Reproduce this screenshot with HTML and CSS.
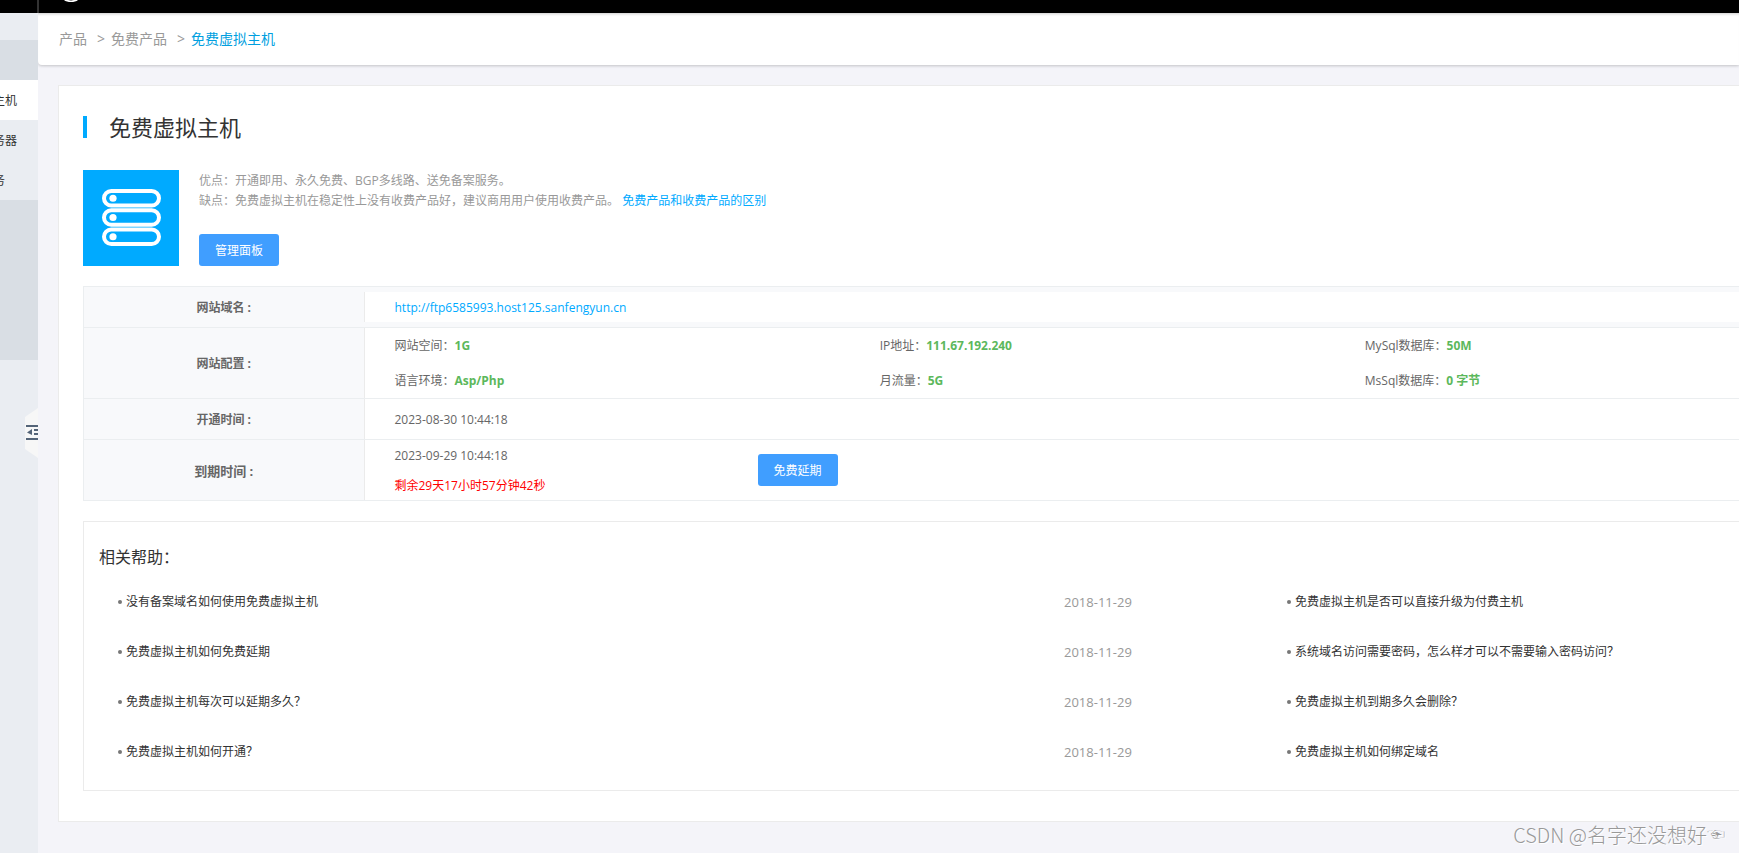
FILE: index.html
```html
<!DOCTYPE html>
<html lang="zh-CN">
<head>
<meta charset="utf-8">
<title>免费虚拟主机</title>
<link rel="stylesheet" href="styles.css">
</head>
<body>
<div class="page">
  <header class="topbar">
    <div class="topbar-side"></div>
    <svg class="topbar-logo" width="16" height="3" viewBox="0 0 16 3"><path d="M1 0h4c2 .6 4 .6 6 0h4c-3 2.700-11 2.700-14 0z" fill="#fff"/></svg>
  </header>
  <div class="body">
    <aside class="sidebar">
      <nav class="menu">
        <div class="menu-head"></div>
        <a class="menu-item active" href="#">主机</a>
        <a class="menu-item" href="#">务器</a>
        <a class="menu-item short" href="#">务</a>
        <div class="menu-groups"></div>
      </nav>
      <button class="collapse" type="button" aria-label="collapse">
        <svg width="13" height="50" viewBox="0 0 13 50"><path d="M0 9 13 0V50L0 41z" fill="#f7f7f7"/><path d="M1 17h12v2H1zM1 30h12v2H1zM9 21h4v2H9zM9 25h4v2H9zM7 21v6L2 24.500z" fill="#546478"/></svg>
      </button>
    </aside>
    <main class="main">
      <nav class="crumbs">
        <a href="#">产品</a><span class="sep">&gt;</span><a href="#">免费产品</a><span class="sep">&gt;</span><a class="current" href="#">免费虚拟主机</a>
      </nav>
      <section class="card">
        <h1 class="title">免费虚拟主机</h1>
        <div class="intro">
          <svg class="product-icon" width="96" height="96" viewBox="0 0 96 96"><rect width="96" height="96" fill="#00aaff"/><g fill="none" stroke="#fff" stroke-width="4"><rect x="21" y="21" width="55" height="14.500" rx="7.250"/><rect x="21" y="40.250" width="55" height="14.500" rx="7.250"/><rect x="21" y="59.500" width="55" height="14.500" rx="7.250"/></g><g fill="#fff"><circle cx="30" cy="28.250" r="3.600"/><circle cx="30" cy="47.500" r="3.600"/><circle cx="30" cy="66.750" r="3.600"/></g></svg>
          <div class="intro-text">
            <p>优点：开通即用、永久免费、BGP多线路、送免备案服务。</p>
            <p>缺点：免费虚拟主机在稳定性上没有收费产品好，建议商用用户使用收费产品。 <a href="#">免费产品和收费产品的区别</a></p>
            <button class="btn" type="button">管理面板</button>
          </div>
        </div>
        <table class="info">
          <tr class="domain"><th>网站域名 :</th><td><div class="line"><a href="#">http://ftp6585993.host125.sanfengyun.cn</a></div></td></tr>
          <tr><th>网站配置 :</th><td><div class="specs">
            <span>网站空间：<b>1G</b></span><span>IP地址：<b>111.67.192.240</b></span><span>MySql数据库：<b>50M</b></span>
            <span>语言环境：<b>Asp/Php</b></span><span>月流量：<b>5G</b></span><span>MsSql数据库：<b>0 字节</b></span>
          </div></td></tr>
          <tr><th>开通时间 :</th><td><div class="opened">2023-08-30 10:44:18</div></td></tr>
          <tr class="expiry"><th>到期时间 :</th><td><div class="renew"><div class="dates"><div>2023-09-29 10:44:18</div><div class="left">剩余29天17小时57分钟42秒</div></div><button class="btn" type="button">免费延期</button></div></td></tr>
        </table>
        <section class="help">
          <h2>相关帮助：</h2>
          <div class="help-grid">
            <ul>
              <li><a href="#">没有备案域名如何使用免费虚拟主机</a><time>2018-11-29</time></li>
              <li><a href="#">免费虚拟主机如何免费延期</a><time>2018-11-29</time></li>
              <li><a href="#">免费虚拟主机每次可以延期多久？</a><time>2018-11-29</time></li>
              <li><a href="#">免费虚拟主机如何开通？</a><time>2018-11-29</time></li>
            </ul>
            <ul>
              <li><a href="#">免费虚拟主机是否可以直接升级为付费主机</a></li>
              <li><a href="#">系统域名访问需要密码，怎么样才可以不需要输入密码访问？</a></li>
              <li><a href="#">免费虚拟主机到期多久会删除？</a></li>
              <li><a href="#">免费虚拟主机如何绑定域名</a></li>
            </ul>
          </div>
        </section>
      </section>
    </main>
  </div>
  <div class="watermark">CSDN @名字还没想好<span>☜</span></div>
</div>
</body>
</html>
```
FILE: styles.css
```css
* { box-sizing: border-box; }
body, h1, h2, p, ul { margin: 0; padding: 0; }
body {
  font: 12px/20px "Open Sans", "Noto Sans CJK SC", sans-serif;
  color: #666;
  background: #f4f4f9;
}
a { color: #0af; text-decoration: none; }
.page { position: relative; min-height: 100vh; display: flex; flex-direction: column; overflow: hidden; }

.topbar { height: 13px; background: #000; display: flex; align-items: flex-start; gap: 24px; }
.topbar-side { width: 39px; height: 13px; border-right: 2px solid #333; }

.body { flex: 1; display: flex; }
.sidebar { position: relative; flex: 0 0 38px; background: #eaedf2; overflow: hidden; }
.menu { width: 120px; margin-left: -82px; padding-top: 27px; }
.menu-head { height: 40px; background: #d9dee4; }
.menu-item { display: block; height: 40px; line-height: 42px; padding-right: 21px; text-align: right; color: #333; background: #eaedf2; }
.menu-item.active { background: #fff; }
.menu-item.short { padding-right: 33px; }
.menu-groups { height: 160px; background: #d9dee4; }
.collapse { position: absolute; right: 0; top: 395px; padding: 0; border: 0; background: none; display: flex; }

.main { flex: 1; min-width: 0; }
.crumbs { height: 52px; padding: 0 21px; display: flex; align-items: center; font-size: 14px; background: #fff; border-radius: 0 0 0 4px; box-shadow: 0 1px 3px rgba(0, 0, 0, .2), inset 0 3px 3px -2px rgba(0, 0, 0, .2); }
.crumbs a { color: #999; }
.crumbs .sep { padding: 0 6px 0 10px; color: #999; }
.crumbs .current { color: #009fdf; }

.card { margin: 20px -137px 31px 20px; padding: 24px; padding-bottom: 30px; background: #fff; border: 1px solid #ebebeb; }
.title { display: flex; align-items: center; height: 34px; gap: 22px; font-size: 22px; font-weight: 400; line-height: 30px; color: #333; }
.title::before { content: ""; width: 4px; height: 22px; background: #0af; }
.intro { display: flex; gap: 20px; margin: 26px 0 20px; }
.intro-text { padding-top: 1px; color: #999; }
.btn { width: 80px; height: 32px; padding: 2px 0 0; border: 0; border-radius: 3px; background: #409eff; color: #fff; font: inherit; }
.intro-text .btn { margin-top: 23px; }

.info { width: 100%; table-layout: fixed; border-collapse: collapse; }
.info tr { border: 1px solid #ebeef0; }
.info th { width: 280px; padding: 1px 0 0; background: #f8f9fb; font-weight: 700; }
.info td { padding: 0; }
.info td > div { padding-left: 30px; border-left: 1px solid #ebebeb; }
.domain { background: #f8f9fb; }
.info .line { height: 30px; line-height: 32px; margin: 5px 0; background: #fff; }
.specs { display: grid; grid-template-columns: repeat(3, 1fr); line-height: 35px; }
.info b { color: #5cb85c; }
.info .opened { height: 40px; line-height: 42px; }
.info .renew { display: flex; align-items: center; }
.dates { width: 363px; height: 60px; padding-top: 1px; line-height: 30px; }
.left { color: #f00; }
.expiry th { font-size: 13px; }

.help { margin-top: 20px; padding: 21px 15px 13px; border: 1px solid #ebebeb; }
.help h2 { margin-bottom: 6px; font-size: 16px; line-height: 28px; font-weight: 400; color: #333; }
.help-grid { display: grid; grid-template-columns: 1169px 1fr; padding-left: 19px; }
.help ul { list-style: none; }
.help li { display: flex; align-items: center; line-height: 50px; }
.help li::before { content: ""; width: 4px; height: 4px; border-radius: 2px; background: #777; margin-right: 4px; }
.help li a { flex: 0 0 938px; color: #333; }
.help time { font-size: 13px; color: #999; }

.watermark { position: absolute; right: 14px; bottom: 5px; display: flex; align-items: center; font-family: "Noto Sans CJK SC", sans-serif; font-size: 20px; font-weight: 300; line-height: 26px; color: #999; text-shadow: 1px 1px 0 #fff; }
.watermark span { font-family: "DejaVu Sans", sans-serif; font-size: 18px; }
```
